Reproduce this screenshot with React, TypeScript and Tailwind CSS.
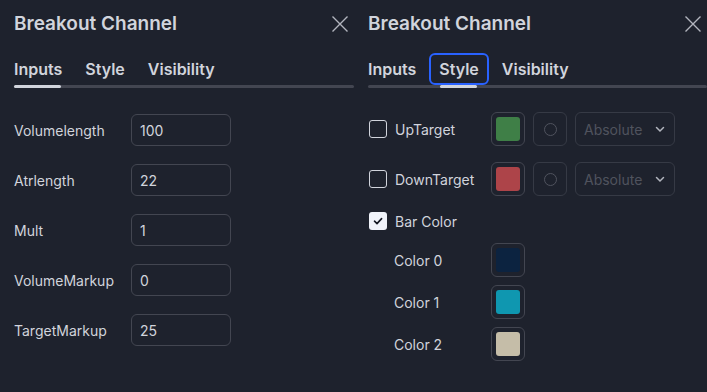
import React from 'react';

const font = { fontFamily: 'Inter, "Noto Sans", sans-serif' };

const CloseIcon = () => (
  <svg width="18" height="18" viewBox="0 0 18 18" className="text-[#b2b5be]">
    <path d="M1.5 1.5 L16.5 16.5 M16.5 1.5 L1.5 16.5" stroke="currentColor" strokeWidth="1.4" fill="none" />
  </svg>
);

const Header = ({ active }: { active: number }) => {
  const tabs = ['Inputs', 'Style', 'Visibility'];
  return (
    <div>
      <div className="flex h-[44px] items-center justify-between pr-[5px] pt-[4px]">
        <h1 className="text-[19px] font-semibold leading-6 text-[#d1d4dc]">Breakout Channel</h1>
        <CloseIcon />
      </div>
      <div className="-ml-[10px] mt-[9px] flex gap-[3px]">
        {tabs.map((t, i) => (
          <button
            key={t}
            className={`h-[32px] rounded-[6px] border-2 px-[8px] text-[16px] font-semibold text-[#d1d4dc] ${
              active === 1 && i === 1 ? 'border-[#2962ff]' : 'border-transparent'
            }`}
          >
            {t}
          </button>
        ))}
      </div>
      <div className="flex h-[3px] rounded-full bg-[#434651]">
        {active === 0 ? (
          <div className="h-[3px] w-[47px] rounded-full bg-[#d1d4dc]" />
        ) : (
          <div className="ml-[72px] h-[3px] w-[37px] rounded-full bg-[#d1d4dc]" />
        )}
      </div>
    </div>
  );
};

const inputs: [string, string][] = [
  ['Volumelength', '100'],
  ['Atrlength', '22'],
  ['Mult', '1'],
  ['VolumeMarkup', '0'],
  ['TargetMarkup', '25'],
];

const Swatch = ({ color }: { color: string }) => (
  <div className="flex h-[34px] w-[34px] items-center justify-center rounded-[6px] border border-[#434651]">
    <div className="h-[24px] w-[24px] rounded-[3px]" style={{ backgroundColor: color }} />
  </div>
);

const Checkbox = ({ checked }: { checked?: boolean }) =>
  checked ? (
    <div className="flex h-[18px] w-[18px] items-center justify-center rounded-[3px] bg-[#f0f3fa]">
      <svg width="12" height="12" viewBox="0 0 12 12">
        <path d="M2.5 6.2 L5 8.6 L9.6 3.6" stroke="#131722" strokeWidth="1.6" fill="none" strokeLinecap="round" strokeLinejoin="round" />
      </svg>
    </div>
  ) : (
    <div className="h-[18px] w-[18px] rounded-[3px] border border-[#d1d4dc]" />
  );

const TargetRow = ({ label, color }: { label: string; color: string }) => (
  <div className="flex h-[34px] items-center">
    <div className="ml-[1px] flex w-[122px] items-center gap-[8px]">
      <Checkbox />
      <span className="text-[14px] text-[#d1d4dc]">{label}</span>
    </div>
    <div className="flex gap-[8px]">
      <Swatch color={color} />
      <div className="flex h-[34px] w-[34px] items-center justify-center rounded-[6px] border border-[#363a45]">
        <div className="h-[13px] w-[13px] rounded-full border border-[#50535e]" />
      </div>
      <div className="flex h-[34px] w-[100px] items-center justify-between rounded-[6px] border border-[#363a45] pl-[8px] pr-[8px]">
        <span className="text-[14px] text-[#50535e]">Absolute</span>
        <svg width="12" height="12" viewBox="0 0 12 12">
          <path d="M2.5 4.5 L6 8 L9.5 4.5" stroke="#b2b5be" strokeWidth="1.5" fill="none" strokeLinecap="round" />
        </svg>
      </div>
    </div>
  </div>
);

const colors: [string, string][] = [
  ['Color 0', '#0c2340'],
  ['Color 1', '#0f97b0'],
  ['Color 2', '#c5bda8'],
];

const App: React.FC = () => {
  return (
    <div className="flex h-[392px] w-[707px] bg-[#1e222d]" style={font}>
      {/* Inputs tab */}
      <div className="w-[354px] pl-[14px]">
        <Header active={0} />
        <div className="mt-[26px] flex flex-col gap-[18px]">
          {inputs.map(([label, value]) => (
            <div key={label} className="flex h-[32px] items-center">
              <span className="w-[117px] text-[14px] text-[#d1d4dc]">{label}</span>
              <div className="flex h-[32px] w-[100px] items-center rounded-[6px] border border-[#434651] px-[8px] text-[14px] text-[#d1d4dc]">
                {value}
              </div>
            </div>
          ))}
        </div>
      </div>

      {/* Style tab */}
      <div className="w-[353px] pl-[14px]">
        <Header active={1} />
        <div className="mt-[24px] flex flex-col gap-[16px]">
          <TargetRow label="UpTarget" color="#3f7f47" />
          <TargetRow label="DownTarget" color="#ad4449" />
        </div>
        <div className="ml-[1px] mt-[16px] flex h-[18px] items-center gap-[8px]">
          <Checkbox checked />
          <span className="text-[14px] text-[#d1d4dc]">Bar Color</span>
        </div>
        <div className="mt-[13px] flex flex-col gap-[8px]">
          {colors.map(([label, c]) => (
            <div key={label} className="flex h-[34px] items-center">
              <span className="ml-[26px] w-[97px] text-[14px] text-[#d1d4dc]">{label}</span>
              <Swatch color={c} />
            </div>
          ))}
        </div>
      </div>
    </div>
  );
};

export default App;
